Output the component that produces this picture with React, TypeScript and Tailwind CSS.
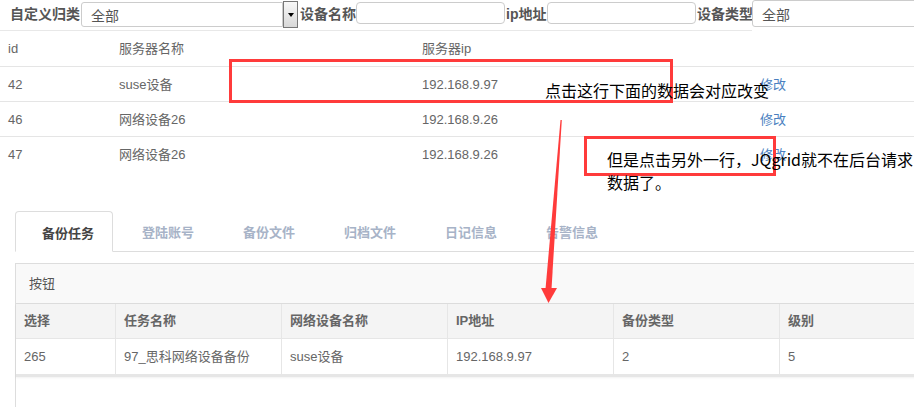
import React from "react";

const font = { fontFamily: '"Liberation Sans", "Noto Sans CJK SC", sans-serif' };

const topRows = [
  { id: "42", name: "suse设备", ip: "192.168.9.97" },
  { id: "46", name: "网络设备26", ip: "192.168.9.26" },
  { id: "47", name: "网络设备26", ip: "192.168.9.26" },
];

const tabs = ["登陆账号", "备份文件", "归档文件", "日记信息", "告警信息"];
const cols = [
  { w: "w-[99px]", h: "选择", v: "265" },
  { w: "w-[166px]", h: "任务名称", v: "97_思科网络设备备份" },
  { w: "w-[166px]", h: "网络设备名称", v: "suse设备" },
  { w: "w-[166px]", h: "IP地址", v: "192.168.9.97" },
  { w: "w-[166px]", h: "备份类型", v: "2" },
  { w: "w-[166px]", h: "级别", v: "5" },
];

export default function App() {
  return (
    <div className="relative w-[914px] h-[407px] overflow-hidden bg-white text-[13px] text-[#666]" style={font}>
      {/* filter bar */}
      <div className="flex items-start h-[30px] w-[914px] text-[14px] font-bold text-[#555]">
        <span className="shrink-0 pl-[10px] pt-[4px] w-[81px] whitespace-nowrap">自定义归类</span>
        <div className="shrink-0 flex mt-[2px]">
          <div className="w-[202px] h-[25px] border border-[#ccc] rounded-l-[3px] pl-[9px] pt-[3px] font-normal text-[#555]">全部</div>
          <div className="w-[15px] h-[27px] -mt-[1px] border border-[#777] bg-gradient-to-b from-[#f8f8f8] to-[#d8d8d8] flex items-center justify-center">
            <div className="w-0 h-0 border-l-[3.5px] border-r-[3.5px] border-t-[4px] border-l-transparent border-r-transparent border-t-black" />
          </div>
        </div>
        <span className="shrink-0 pl-[2px] pt-[4px] w-[58px] whitespace-nowrap">设备名称</span>
        <div className="shrink-0 w-[149px] h-[22px] mt-[2px] border border-[#ccc] rounded-[4px]" />
        <span className="shrink-0 pl-[1px] pt-[4px] w-[42px] whitespace-nowrap">ip地址</span>
        <div className="shrink-0 w-[149px] h-[22px] mt-[2px] border border-[#ccc] rounded-[4px]" />
        <span className="shrink-0 pl-[1px] pt-[4px] w-[56px] whitespace-nowrap">设备类型</span>
        <div className="shrink-0 w-[170px] h-[27px] border border-[#ccc] rounded-[3px] pl-[9px] pt-[4px] font-normal text-[#555]">全部</div>
      </div>
      <div className="w-[752px] h-px bg-[#e8e8e8]" />

      {/* top table */}
      <div className="w-[914px]">
        <div className="flex h-[36px] pt-[1px] items-center border-b border-[#e5e5e5]">
          <div className="w-[111px] pl-[8px]">id</div>
          <div className="w-[303px] pl-[8px]">服务器名称</div>
          <div className="w-[338px] pl-[8px]">服务器ip</div>
          <div className="pl-[8px]"></div>
        </div>
        {topRows.map((r, i) => (
          <div key={r.id} className={`flex h-[35px] pt-[1px] items-center ${i < 2 ? "border-b border-[#e5e5e5]" : ""}`}>
            <div className="w-[111px] pl-[8px]">{r.id}</div>
            <div className="w-[303px] pl-[8px]">{r.name}</div>
            <div className="w-[338px] pl-[8px]">{r.ip}</div>
            <div className="pl-[8px] text-[#4a7fbf]">修改</div>
          </div>
        ))}
      </div>

      {/* tabs */}
      <div className="mt-[39px] ml-[15px] flex h-[41px] border-b border-[#ddd] font-bold">
        <div className="shrink-0 w-[98px] h-[41px] pl-[26px] pt-[12px] border border-[#ddd] border-b-white rounded-t-[4px] bg-white text-[#444] text-[13px]">备份任务</div>
        <div className="shrink-0 w-[3px]" />
        {tabs.map((t) => (
          <div key={t} className="shrink-0 w-[101px] pl-[26px] pt-[12px] text-[#a7b3c7] whitespace-nowrap">{t}</div>
        ))}
      </div>

      {/* panel */}
      <div className="mt-[11px] ml-[15px] w-[910px] h-[200px] border border-[#ddd]">
        <div className="h-[40px] pt-[1px] bg-[#f9f9f9] border-b border-[#ddd] pl-[13px] flex items-center text-[#555]">按钮</div>
        <div className="flex flex-col border-b-[3px] border-[#e6e6e6] shadow-[0_1px_2px_rgba(0,0,0,0.06)]">
          <div className="flex h-[35px] bg-[#f4f4f4] border-b border-[#e6e6e6] font-bold text-[#666]">
            {cols.map((c, i) => (
              <div key={c.h} className={`shrink-0 ${c.w} pl-[8px] flex items-center ${i > 0 ? "border-l border-[#e6e6e6]" : ""}`}>{c.h}</div>
            ))}
          </div>
          <div className="flex h-[35px]">
            {cols.map((c, i) => (
              <div key={c.h} className={`shrink-0 ${c.w} pl-[8px] flex items-center ${i > 0 ? "border-l border-[#e6e6e6]" : ""}`}>{c.v}</div>
            ))}
          </div>
        </div>
      </div>

      {/* annotations */}
      <div className="absolute left-[229px] top-[59px] w-[444px] h-[44px] border-[3px] border-[#ff3b3b]" />
      <div className="absolute left-[584px] top-[136px] w-[192px] h-[40px] border-[3px] border-[#ff3b3b]" />
      <div className="absolute left-[545px] top-[79px] text-[16px] leading-[22px] text-black whitespace-nowrap" style={{ fontFamily: '"Noto Sans CJK SC", sans-serif' }}>点击这行下面的数据会对应改变</div>
      <div className="absolute left-[607px] top-[148px] w-[306px] text-[16px] leading-[23px] text-black" style={{ fontFamily: '"Noto Sans CJK SC", sans-serif' }}>但是点击另外一行，JQgrid就不在后台请求数据了。</div>
      <svg className="absolute left-0 top-0" width="914" height="407" viewBox="0 0 914 407">
        <polygon points="560.5,120 561.8,120 551.5,289 545.5,289" fill="#ff3b3b" />
        <polygon points="541,288 557,288 548.5,303" fill="#ff3b3b" />
      </svg>
    </div>
  );
}
